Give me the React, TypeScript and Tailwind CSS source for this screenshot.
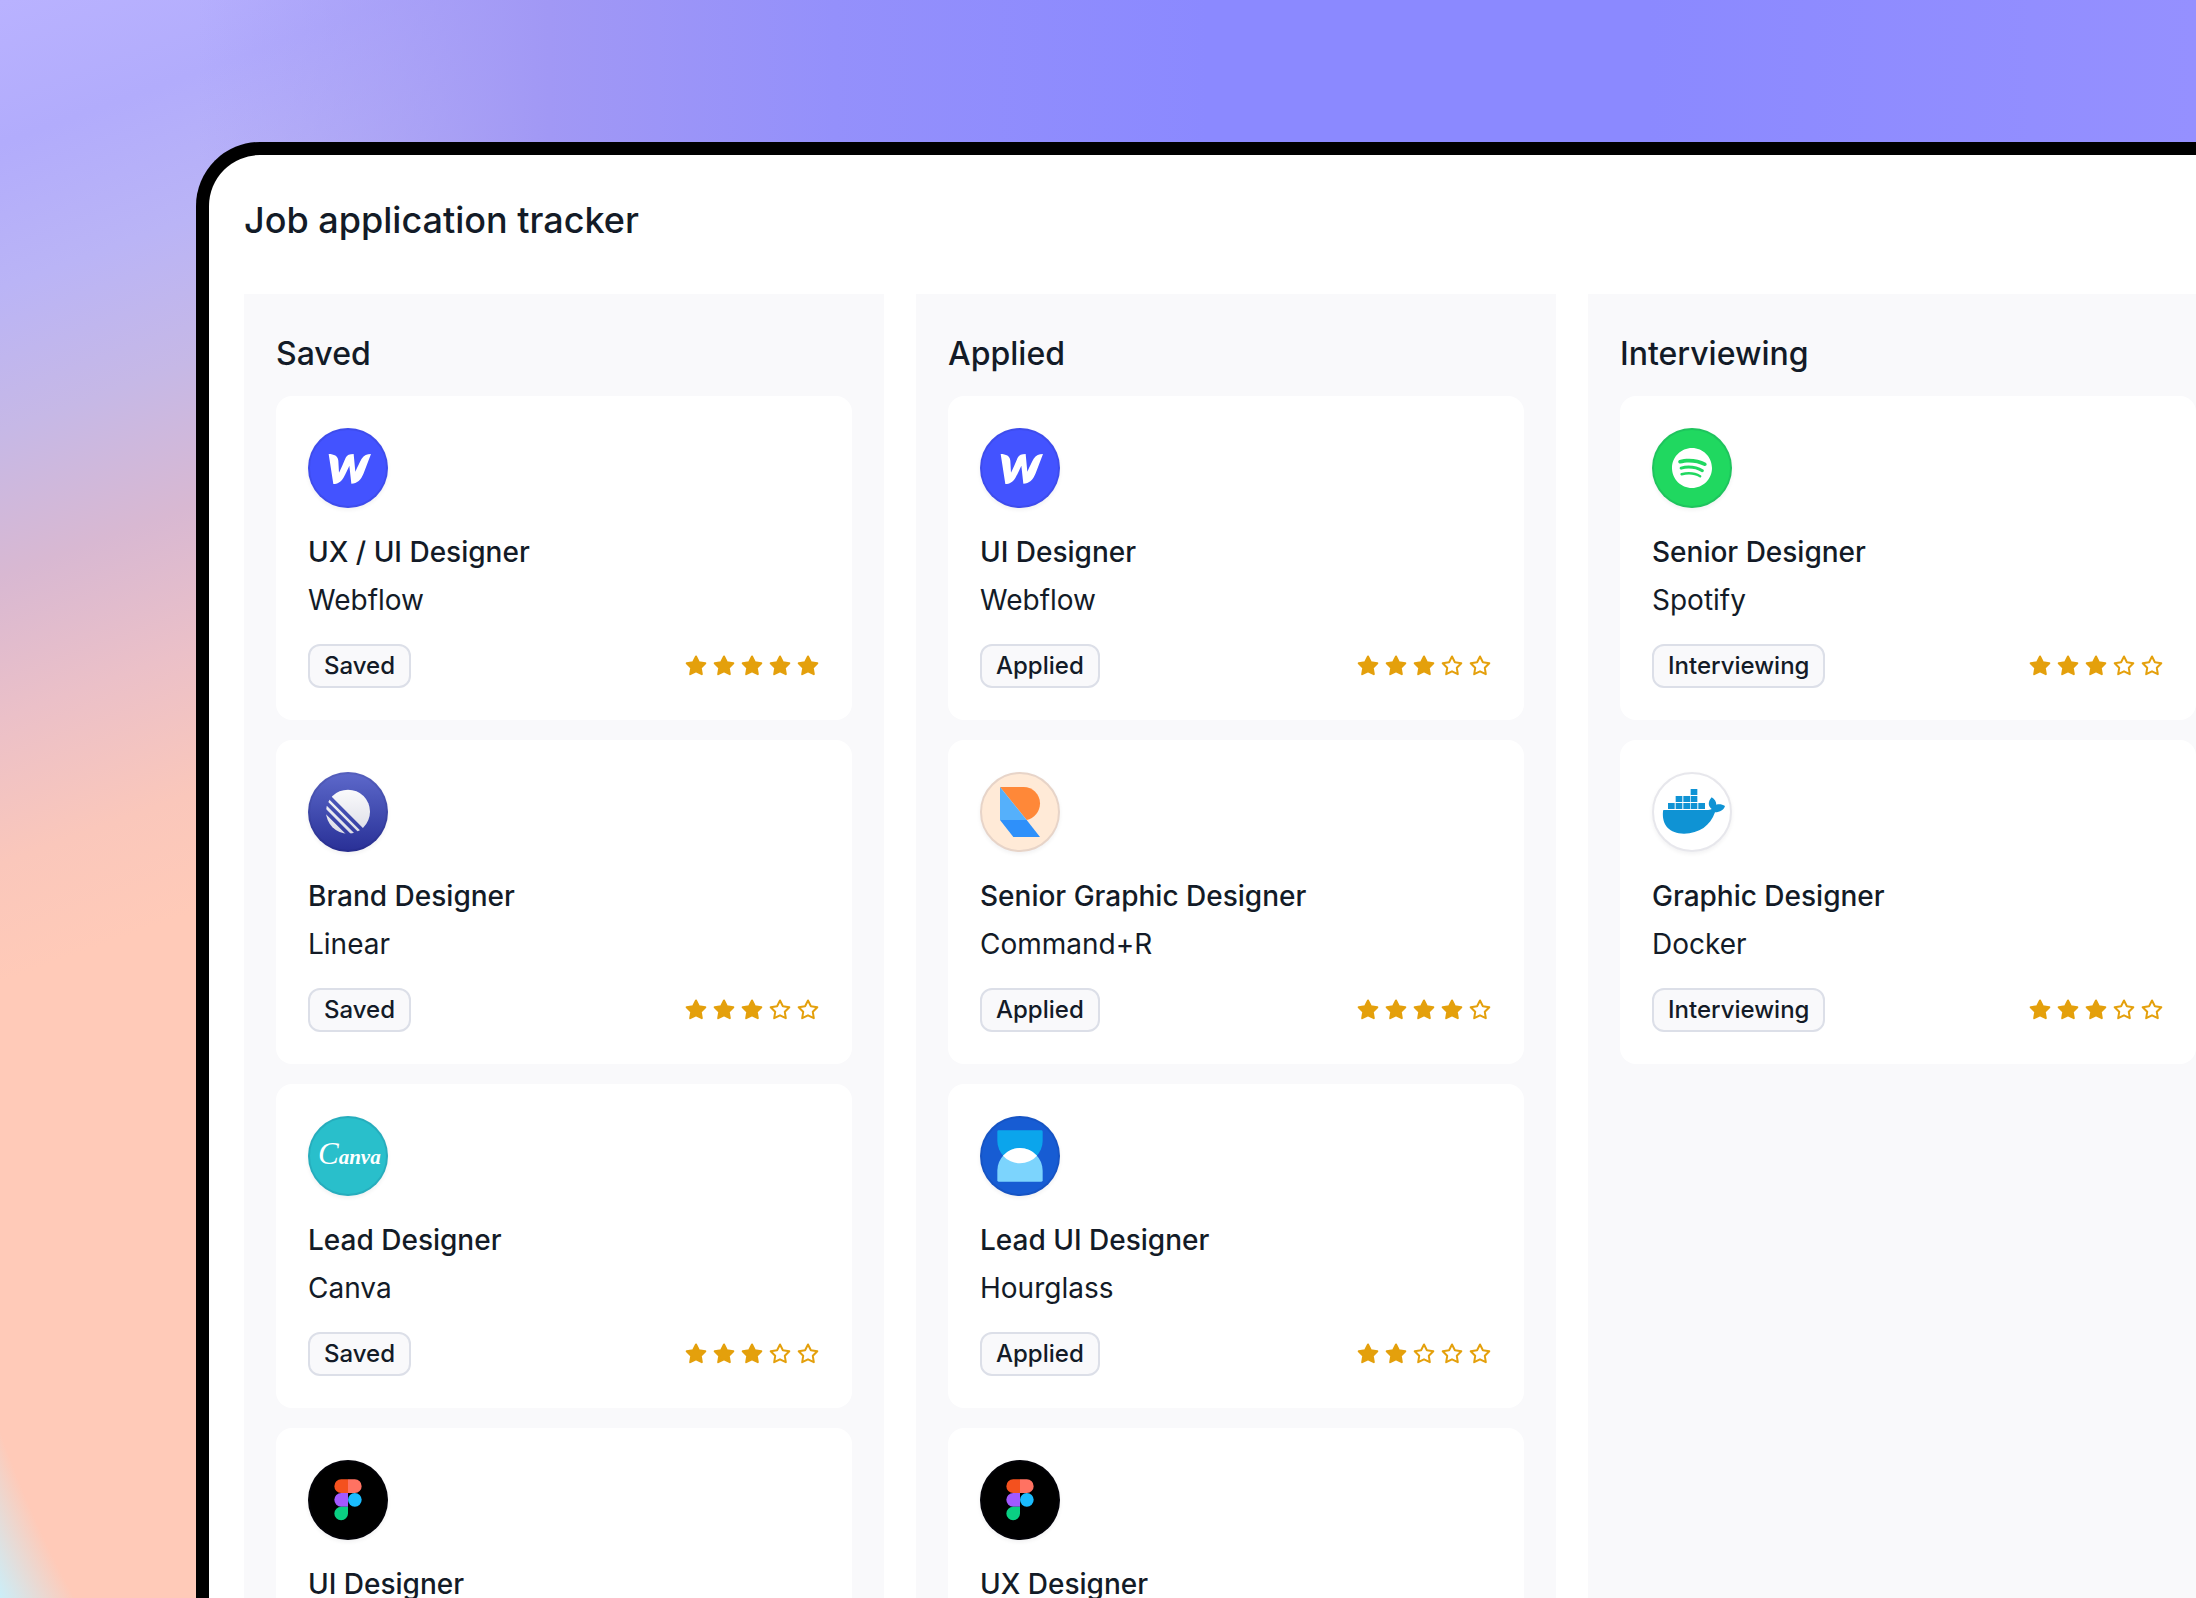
import type { ReactNode } from "react";
import { SiSpotify } from "react-icons/si";

type Company = "Webflow" | "Linear" | "Canva" | "Figma" | "Command+R" | "Hourglass" | "Spotify" | "Docker";

type Job = {
  title: string;
  company: Company;
  rating: number;
};

type Column = {
  status: string;
  jobs: Job[];
};

const columns: Column[] = [
  {
    status: "Saved",
    jobs: [
      { title: "UX / UI Designer", company: "Webflow", rating: 5 },
      { title: "Brand Designer", company: "Linear", rating: 3 },
      { title: "Lead Designer", company: "Canva", rating: 3 },
      { title: "UI Designer", company: "Figma", rating: 4 },
    ],
  },
  {
    status: "Applied",
    jobs: [
      { title: "UI Designer", company: "Webflow", rating: 3 },
      { title: "Senior Graphic Designer", company: "Command+R", rating: 4 },
      { title: "Lead UI Designer", company: "Hourglass", rating: 2 },
      { title: "UX Designer", company: "Figma", rating: 3 },
    ],
  },
  {
    status: "Interviewing",
    jobs: [
      { title: "Senior Designer", company: "Spotify", rating: 3 },
      { title: "Graphic Designer", company: "Docker", rating: 3 },
    ],
  },
];

function WebflowLogo() {
  return (
    <svg viewBox="54 54 240 240" className="size-full" fill="#fff">
      <path d="M116 132c16 0 28 6 29 20l2 36c8-16 14-32 20-45 4-8 12-11 24-11l5 53c7-15 13-29 19-39 7-10 16-14 28-14l-22 58c-8 20-19 31-37 31l-6-54c-8 18-13 28-18 37-8 13-17 18-30 18z" />
    </svg>
  );
}

function LinearLogo() {
  return (
    <svg viewBox="54 51 240 240" className="size-full">
      <defs>
        <linearGradient id="linear-fill" x1="0" y1="0" x2="0" y2="1">
          <stop offset="0" stopColor="#fafafc" />
          <stop offset="1" stopColor="#dcdde6" />
        </linearGradient>
        <mask id="linear-stripes">
          <rect x="54" y="51" width="240" height="240" fill="#fff" />
          <path d="M84 92l160 160M84 118l160 160M74 136l160 160" stroke="#000" strokeWidth="11" />
        </mask>
      </defs>
      <circle cx="174" cy="170" r="66" fill="url(#linear-fill)" mask="url(#linear-stripes)" />
    </svg>
  );
}

function CanvaLogo() {
  return (
    <svg viewBox="0 0 80 80" className="size-full" fill="#fff">
      <text x="10" y="48" className="font-['Liberation_Serif',serif] text-[21px] font-bold italic">
        <tspan className="text-[31px] font-normal">C</tspan>
        <tspan>anva</tspan>
      </text>
    </svg>
  );
}

function FigmaLogo() {
  return (
    <svg viewBox="54 60 240 240" className="size-full">
      <path fill="#f4511e" d="M174 118h-20.500a20.500 20.500 0 0 0 0 41H174z" />
      <path fill="#ff7262" d="M174 118h20.500a20.500 20.500 0 0 1 0 41H174z" />
      <path fill="#a259ff" d="M174 159h-20.500a20.500 20.500 0 0 0 0 41H174z" />
      <circle fill="#1abcfe" cx="194.500" cy="179.500" r="20.500" />
      <path fill="#0acf83" d="M174 200h-20.500a20.500 20.500 0 1 0 20.500 20.500z" />
    </svg>
  );
}

function CommandRLogo() {
  return (
    <svg viewBox="60 51 240 240" className="size-full">
      <path fill="#ff8838" d="M120 96h71c27 0 49 22 49 49 0 26-18 46-40 50z" />
      <path fill="#55b0fb" d="M120 96v99h80z" />
      <path fill="#2e90fa" d="M120 195h80l40 51h-80z" />
    </svg>
  );
}

function HourglassLogo() {
  return (
    <svg viewBox="60 48 240 240" className="size-full">
      <path fill="#0ba5ec" d="M112 95q0-4 4-4h128q4 0 4 4v27a68 68 0 0 1-136 0z" />
      <path fill="#7cd4fd" d="M112 241v-29a68 68 0 0 1 136 0v29q0 4-4 4H116q-4 0-4-4z" />
      <path fill="#fff" d="M129 167a68 68 0 0 1 102 0 68 68 0 0 1-102 0z" />
    </svg>
  );
}

function SpotifyLogo() {
  return <SiSpotify size={40} color="#fff" />;
}

function DockerLogo() {
  return (
    <svg viewBox="66 51 240 240" className="size-full" fill="#0f93d4">
      <path d="M114 144h20v18h-20zM137 144h20v18h-20zM160 144h20v18h-20zM182 144h20v18h-20zM205 144h20v18h-20z" />
      <path d="M137 123h20v18h-20zM160 123h20v18h-20zM182 123h20v18h-20zM182 102h20v18h-20z" />
      <path d="M103 165h127c7 0 11-1 15-3-11-8-12-22 0-35 9 5 14 13 14 22 9-2 18-1 26 4-4 12-14 18-30 19-14 40-47 64-93 64-43 0-67-25-63-67 0-3 1-4 4-4z" />
    </svg>
  );
}

const logos: Record<Company, { className: string; logo: ReactNode }> = {
  Webflow: { className: "bg-[#4353ff]", logo: <WebflowLogo /> },
  Linear: { className: "bg-linear-to-b from-[#5e69cb] to-[#292f96]", logo: <LinearLogo /> },
  Canva: { className: "bg-[#29bfcb]", logo: <CanvaLogo /> },
  Figma: { className: "bg-black", logo: <FigmaLogo /> },
  "Command+R": { className: "bg-[#ffead7]", logo: <CommandRLogo /> },
  Hourglass: { className: "bg-[#175cd3]", logo: <HourglassLogo /> },
  Spotify: { className: "bg-[#20d860]", logo: <SpotifyLogo /> },
  Docker: { className: "bg-white", logo: <DockerLogo /> },
};

function Avatar({ company }: { company: Company }) {
  const { className, logo } = logos[company];

  return (
    <div className={`relative flex size-20 items-center justify-center rounded-full shadow-[0_2px_4px_rgba(16,24,40,0.06)] ${className}`}>
      {logo}
      <span className="absolute inset-0 rounded-full border-2 border-[#101840]/10" />
    </div>
  );
}

function Rating({ value }: { value: number }) {
  return (
    <div className="flex gap-1" role="img" aria-label={`${value} out of 5`}>
      {[1, 2, 3, 4, 5].map((n) => (
        <svg
          key={n}
          viewBox="0 0 24 24"
          className="size-6"
          fill={n <= value ? "#e4a00c" : "none"}
          stroke="#e4a00c"
          strokeWidth="2"
          strokeLinejoin="round"
        >
          <path d="M12 2.500l2.900 5.800 6.400 1-4.500 4.500 1 6.400L12 17.300l-5.800 2.900 1-6.400-4.500-4.500 6.400-1z" />
        </svg>
      ))}
    </div>
  );
}

function JobCard({ job, status }: { job: Job; status: string }) {
  return (
    <article className="rounded-2xl bg-white p-8">
      <Avatar company={job.company} />
      <h3 className="mt-5 text-[28px] leading-12 font-medium">{job.title}</h3>
      <p className="text-[28px] leading-12">{job.company}</p>
      <div className="mt-5 flex items-center justify-between">
        <span className="flex h-11 items-center rounded-xl border-2 border-[#dcdfe8] bg-[#f9f9fb] px-3.5 text-2xl font-medium">
          {status}
        </span>
        <Rating value={job.rating} />
      </div>
    </article>
  );
}

export default function App() {
  return (
    <div className="relative flex h-screen overflow-hidden bg-[linear-gradient(to_right,transparent_9%,#a198f5_25%,#9490fb_38%,#8b89ff_55%,#8b89ff_75%,#9590ff_100%),linear-gradient(160deg,#b9b2ff_0%,#b2acfc_6%,#bab4f6_12%,#c6b8e6_18%,#d8b8d2_24%,#ebc0c8_30%,#fac7bb_36%,#ffcab8_41%)] pt-[142px] pl-[196px] font-['Inter',sans-serif] text-[#131b27]">
      {/* Cyan glow in the bottom corner */}
      <div className="absolute bottom-0 left-0 h-75 w-49 bg-[radial-gradient(640px_900px_at_620px_-298px,transparent_108%,#c8f0fc_118%)]" />

      <main className="relative flex min-w-0 flex-1 flex-col rounded-tl-[64px] border-t-[13px] border-l-[13px] border-black bg-white pt-[41px] pl-[35px]">
        <h1 className="mb-[50px] text-4xl leading-12 font-medium">Job application tracker</h1>

        <div className="flex min-h-0 flex-1 gap-8">
          {columns.map((column) => (
            <section key={column.status} className="w-160 shrink-0 bg-[#f9f9fb] px-8 pt-9">
              <h2 className="mb-[18px] text-[32px] leading-12 font-medium">{column.status}</h2>
              <div className="flex flex-col gap-5">
                {column.jobs.map((job) => (
                  <JobCard key={job.title} job={job} status={column.status} />
                ))}
              </div>
            </section>
          ))}
        </div>
      </main>
    </div>
  );
}
